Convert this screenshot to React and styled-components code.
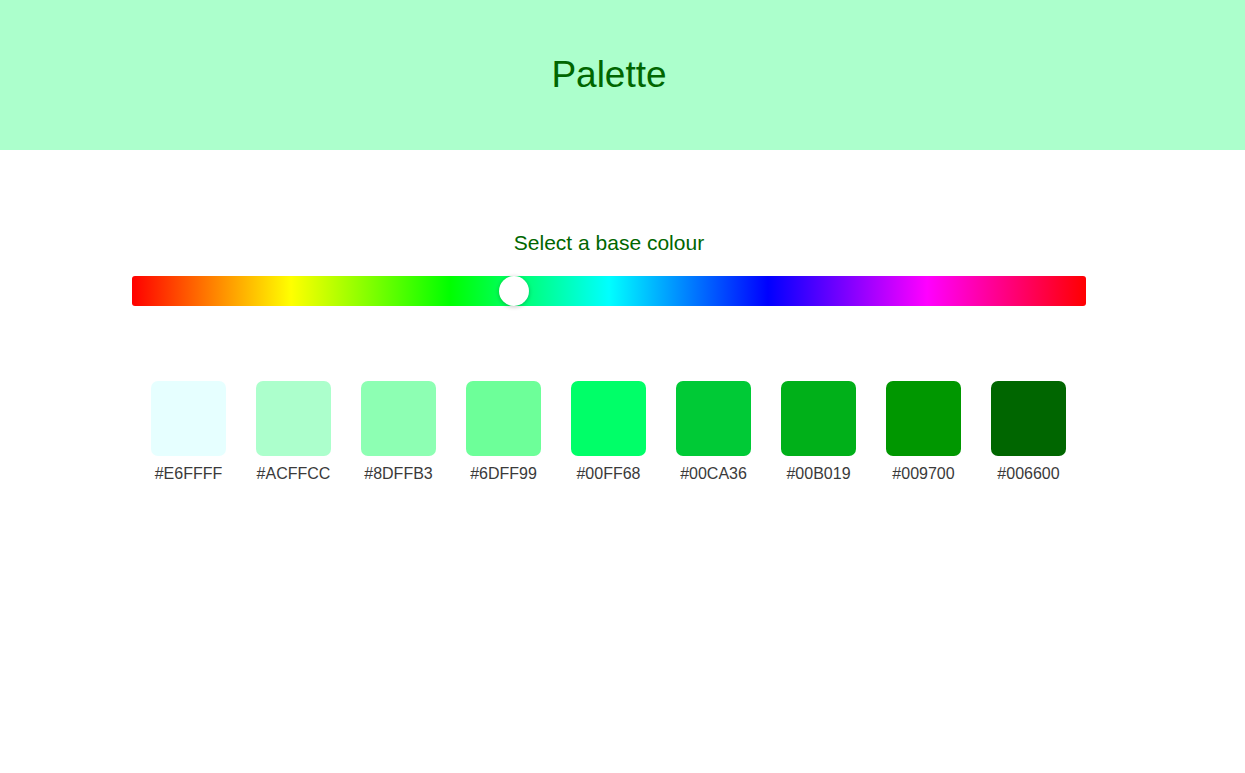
import React, { useState } from "react";
import styled, { createGlobalStyle } from "styled-components";

const GlobalStyle = createGlobalStyle`
  html, body { margin: 0; padding: 0; background: #ffffff; }
  body { font-family: "Liberation Sans", Arial, sans-serif; }
  * { box-sizing: border-box; }
`;

const Header = styled.header`
  height: 150px;
  background: #acffcc;
  display: flex;
  align-items: center;
  justify-content: center;
  padding-right: 27px;
`;

const Title = styled.h1`
  margin: 0;
  font-size: 37px;
  font-weight: 400;
  line-height: 42px;
  color: #006600;
`;

const Main = styled.main`
  padding: 81px 159px 0 132px;
  display: flex;
  flex-direction: column;
  align-items: stretch;
`;

const Label = styled.label`
  display: block;
  text-align: center;
  font-size: 21px;
  line-height: 24px;
  color: #006600;
  margin-bottom: 21px;
`;

const HueSlider = styled.input`
  -webkit-appearance: none;
  appearance: none;
  display: block;
  width: 100%;
  height: 30px;
  margin: 0;
  border-radius: 3px;
  outline: none;
  background: linear-gradient(
    to right,
    #ff0000 0%,
    #ffff00 16.67%,
    #00ff00 33.33%,
    #00ffff 50%,
    #0000ff 66.67%,
    #ff00ff 83.33%,
    #ff0000 100%
  );
  &::-webkit-slider-thumb {
    -webkit-appearance: none;
    appearance: none;
    width: 30px;
    height: 30px;
    border-radius: 50%;
    background: #ffffff;
    box-shadow: 0 1px 4px rgba(0, 0, 0, 0.25);
    cursor: pointer;
  }
  &::-moz-range-thumb {
    width: 30px;
    height: 30px;
    border: none;
    border-radius: 50%;
    background: #ffffff;
    box-shadow: 0 1px 4px rgba(0, 0, 0, 0.25);
  }
`;

const SwatchRow = styled.div`
  display: flex;
  justify-content: flex-start;
  gap: 30px;
  margin-top: 75px;
  padding-left: 19px;
`;

const SwatchItem = styled.div`
  width: 75px;
  display: flex;
  flex-direction: column;
  align-items: center;
  gap: 9px;
`;

const Swatch = styled.div`
  width: 75px;
  height: 75px;
  border-radius: 7px;
  background: ${(p) => p.$color};
`;

const Code = styled.span`
  font-size: 16px;
  line-height: 18px;
  color: #3a3a3a;
  white-space: nowrap;
`;

const COLORS = [
  "#E6FFFF",
  "#ACFFCC",
  "#8DFFB3",
  "#6DFF99",
  "#00FF68",
  "#00CA36",
  "#00B019",
  "#009700",
  "#006600",
];

export default function App() {
  const [hue, setHue] = useState(143);
  return (
    <>
      <GlobalStyle />
      <Header>
        <Title>Palette</Title>
      </Header>
      <Main>
        <Label htmlFor="hue">Select a base colour</Label>
        <HueSlider
          id="hue"
          type="range"
          min="0"
          max="360"
          value={hue}
          onChange={(e) => setHue(Number(e.target.value))}
        />
        <SwatchRow>
          {COLORS.map((c) => (
            <SwatchItem key={c}>
              <Swatch $color={c} />
              <Code>{c}</Code>
            </SwatchItem>
          ))}
        </SwatchRow>
      </Main>
    </>
  );
}
